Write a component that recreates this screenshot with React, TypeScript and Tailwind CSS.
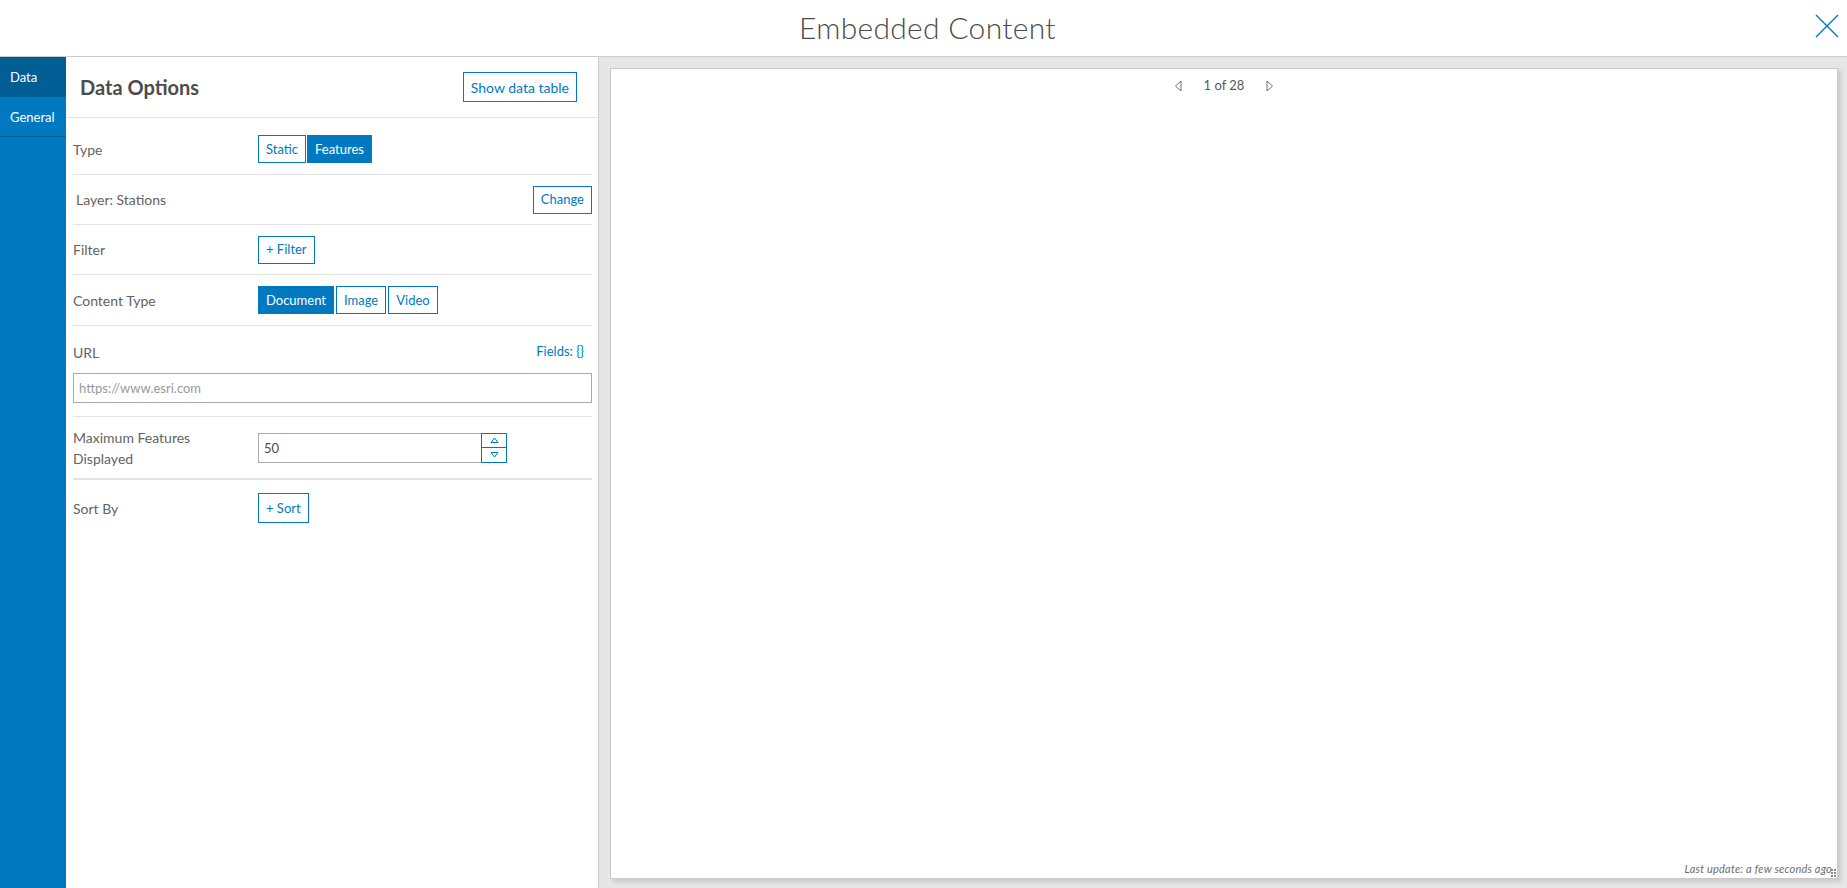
import { useState } from "react";

const BLUE = "#0079c1";

function OutlineBtn({ label, active = false, className = "" }: { label: string; active?: boolean; className?: string }) {
  return (
    <button
      className={
        "h-[28px] px-[7px] border border-[#0079c1] text-[13px] leading-none " +
        (active ? "bg-[#0079c1] text-white" : "bg-white text-[#0079c1]") +
        " " +
        className
      }
    >
      {label}
    </button>
  );
}

function Row({ label, children, className = "" }: { label: React.ReactNode; children?: React.ReactNode; className?: string }) {
  return (
    <div className={"flex items-center border-b border-[#e3e3e3] " + className}>
      <div className="w-[185px] shrink-0 text-[14px] text-[#636363] leading-[21px]">{label}</div>
      <div className="flex-1 flex items-center">{children}</div>
    </div>
  );
}

function Caret({ dir }: { dir: "left" | "right" }) {
  return (
    <svg width="8" height="12" viewBox="0 0 8 12" fill="none">
      {dir === "left" ? (
        <path d="M7 1 L1.5 6 L7 11 Z" stroke="#6e6e6e" strokeWidth="1" strokeLinejoin="miter" />
      ) : (
        <path d="M1 1 L6.5 6 L1 11 Z" stroke="#6e6e6e" strokeWidth="1" strokeLinejoin="miter" />
      )}
    </svg>
  );
}

function Spinner() {
  return (
    <div className="flex flex-col w-[26px] h-[30px]">
      <button className="flex-1 flex items-center justify-center border border-[#0079c1] bg-white">
        <svg width="9" height="6" viewBox="0 0 9 6" fill="none">
          <path d="M1 5.5 L4.5 1 L8 5.5 Z" stroke={BLUE} strokeWidth="1" />
        </svg>
      </button>
      <button className="flex-1 flex items-center justify-center border border-t-0 border-[#0079c1] bg-white">
        <svg width="9" height="6" viewBox="0 0 9 6" fill="none">
          <path d="M1 0.5 L4.5 5 L8 0.5 Z" stroke={BLUE} strokeWidth="1" />
        </svg>
      </button>
    </div>
  );
}

export default function App() {
  const [tab, setTab] = useState("Data");

  return (
    <div className="w-[1847px] h-[888px] flex flex-col bg-white overflow-hidden font-['Lato','Open_Sans',sans-serif]">
      {/* dialog title bar */}
      <header className="relative h-[57px] shrink-0 flex items-center justify-center border-b border-[#cccccc]">
        <h1 className="text-[30px] font-light text-[#4c4c4c] leading-none tracking-[0.3px] -mt-[2px] ml-[8px]">Embedded Content</h1>
        <button className="absolute right-[8px] top-[13px] w-[25px] h-[25px] flex items-center justify-center">
          <svg width="24" height="24" viewBox="0 0 24 24" fill="none">
            <path d="M1 1 L23 23 M23 1 L1 23" stroke={BLUE} strokeWidth="1.4" />
          </svg>
        </button>
      </header>

      <div className="flex flex-1 min-h-0">
        {/* side tabs */}
        <nav className="w-[66px] shrink-0 bg-[#0079c1] flex flex-col">
          {["Data", "General"].map((t) => (
            <button
              key={t}
              onClick={() => setTab(t)}
              className={
                "h-[40px] text-left pl-[10px] pt-[2px] text-[13px] text-white border-b border-[#00609a] " +
                (tab === t ? "bg-[#005e95]" : "bg-[#0079c1]")
              }
            >
              {t}
            </button>
          ))}
        </nav>

        {/* settings panel */}
        <section className="w-[533px] shrink-0 border-r border-[#cccccc] flex flex-col">
          <div className="h-[61px] flex items-center justify-between pl-[14px] pr-[21px] border-b border-[#e3e3e3]">
            <h2 className="text-[20px] font-bold text-[#4c4c4c]">Data Options</h2>
            <button className="h-[30px] px-[7px] border border-[#0079c1] text-[14px] text-[#0079c1] bg-white">
              Show data table
            </button>
          </div>

          <div className="pl-[7px] pr-[6px] flex flex-col">
            <Row label="Type" className="h-[57px] pt-[6px]">
              <div className="flex gap-px">
                <OutlineBtn label="Static" />
                <OutlineBtn label="Features" active />
              </div>
            </Row>

            <div className="h-[50px] flex items-center justify-between border-b border-[#e3e3e3]">
              <span className="pl-[3px] text-[14px] text-[#636363]">Layer: Stations</span>
              <OutlineBtn label="Change" className="h-[27px]" />
            </div>

            <Row label="Filter" className="h-[50px]">
              <OutlineBtn label="+ Filter" />
            </Row>

            <Row label="Content Type" className="h-[51px]">
              <div className="flex gap-[2px]">
                <OutlineBtn label="Document" active />
                <OutlineBtn label="Image" />
                <OutlineBtn label="Video" />
              </div>
            </Row>

            <div className="h-[91px] flex flex-col border-b border-[#e3e3e3]">
              <div className="flex items-center justify-between h-[22px] mt-[15px] pr-[8px]">
                <span className="text-[14px] text-[#636363]">URL</span>
                <span className="text-[13px] text-[#0079c1]">Fields: {"{}"}</span>
              </div>
              <input
                placeholder="https://www.esri.com"
                className="mt-[10px] h-[30px] w-full border border-[#aaaaaa] px-[5px] text-[13px] text-[#4c4c4c] placeholder:text-[#999999] outline-none"
              />
            </div>

            <div className="h-[63px] flex items-center border-b-2 border-[#e3e3e3]">
              <div className="w-[185px] shrink-0 text-[14px] text-[#636363] leading-[21px]">
                Maximum Features
                <br />
                Displayed
              </div>
              <div className="flex items-center">
                <input
                  defaultValue="50"
                  className="w-[223px] h-[30px] border border-r-0 border-[#aaaaaa] px-[5px] text-[13px] text-[#4c4c4c] outline-none"
                />
                <Spinner />
              </div>
            </div>

            <div className="h-[56px] flex items-center">
              <div className="w-[185px] shrink-0 text-[14px] text-[#636363]">Sort By</div>
              <OutlineBtn label="+ Sort" className="h-[30px]" />
            </div>
          </div>
        </section>

        {/* preview area */}
        <main className="flex-1 bg-[#e6e6e6] pl-[11px] pt-[11px] pr-[9px] pb-[9px] flex">
          <div className="relative flex-1 bg-white border border-[#c8c8c8] shadow-[3px_3px_4px_rgba(0,0,0,0.12)] flex flex-col">
            <div className="flex items-center justify-center gap-[22px] pt-[7px] text-[13px] text-[#595959]">
              <Caret dir="left" />
              <span>1 of 28</span>
              <Caret dir="right" />
            </div>
            <div className="flex-1" />
            <div className="flex justify-end pr-[5px] pb-[1px]">
              <span className="text-[11px] italic text-[#6e6e6e] tracking-[0.2px]">Last update: a few seconds ago</span>
            </div>
            {/* resize grip */}
            <div className="absolute right-[1px] bottom-[1px] grid grid-cols-2 gap-[1px]">
              {Array.from({ length: 6 }).map((_, i) => (
                <span key={i} className="w-[2px] h-[2px] bg-[#8a8a8a]" />
              ))}
            </div>
          </div>
        </main>
      </div>
    </div>
  );
}
